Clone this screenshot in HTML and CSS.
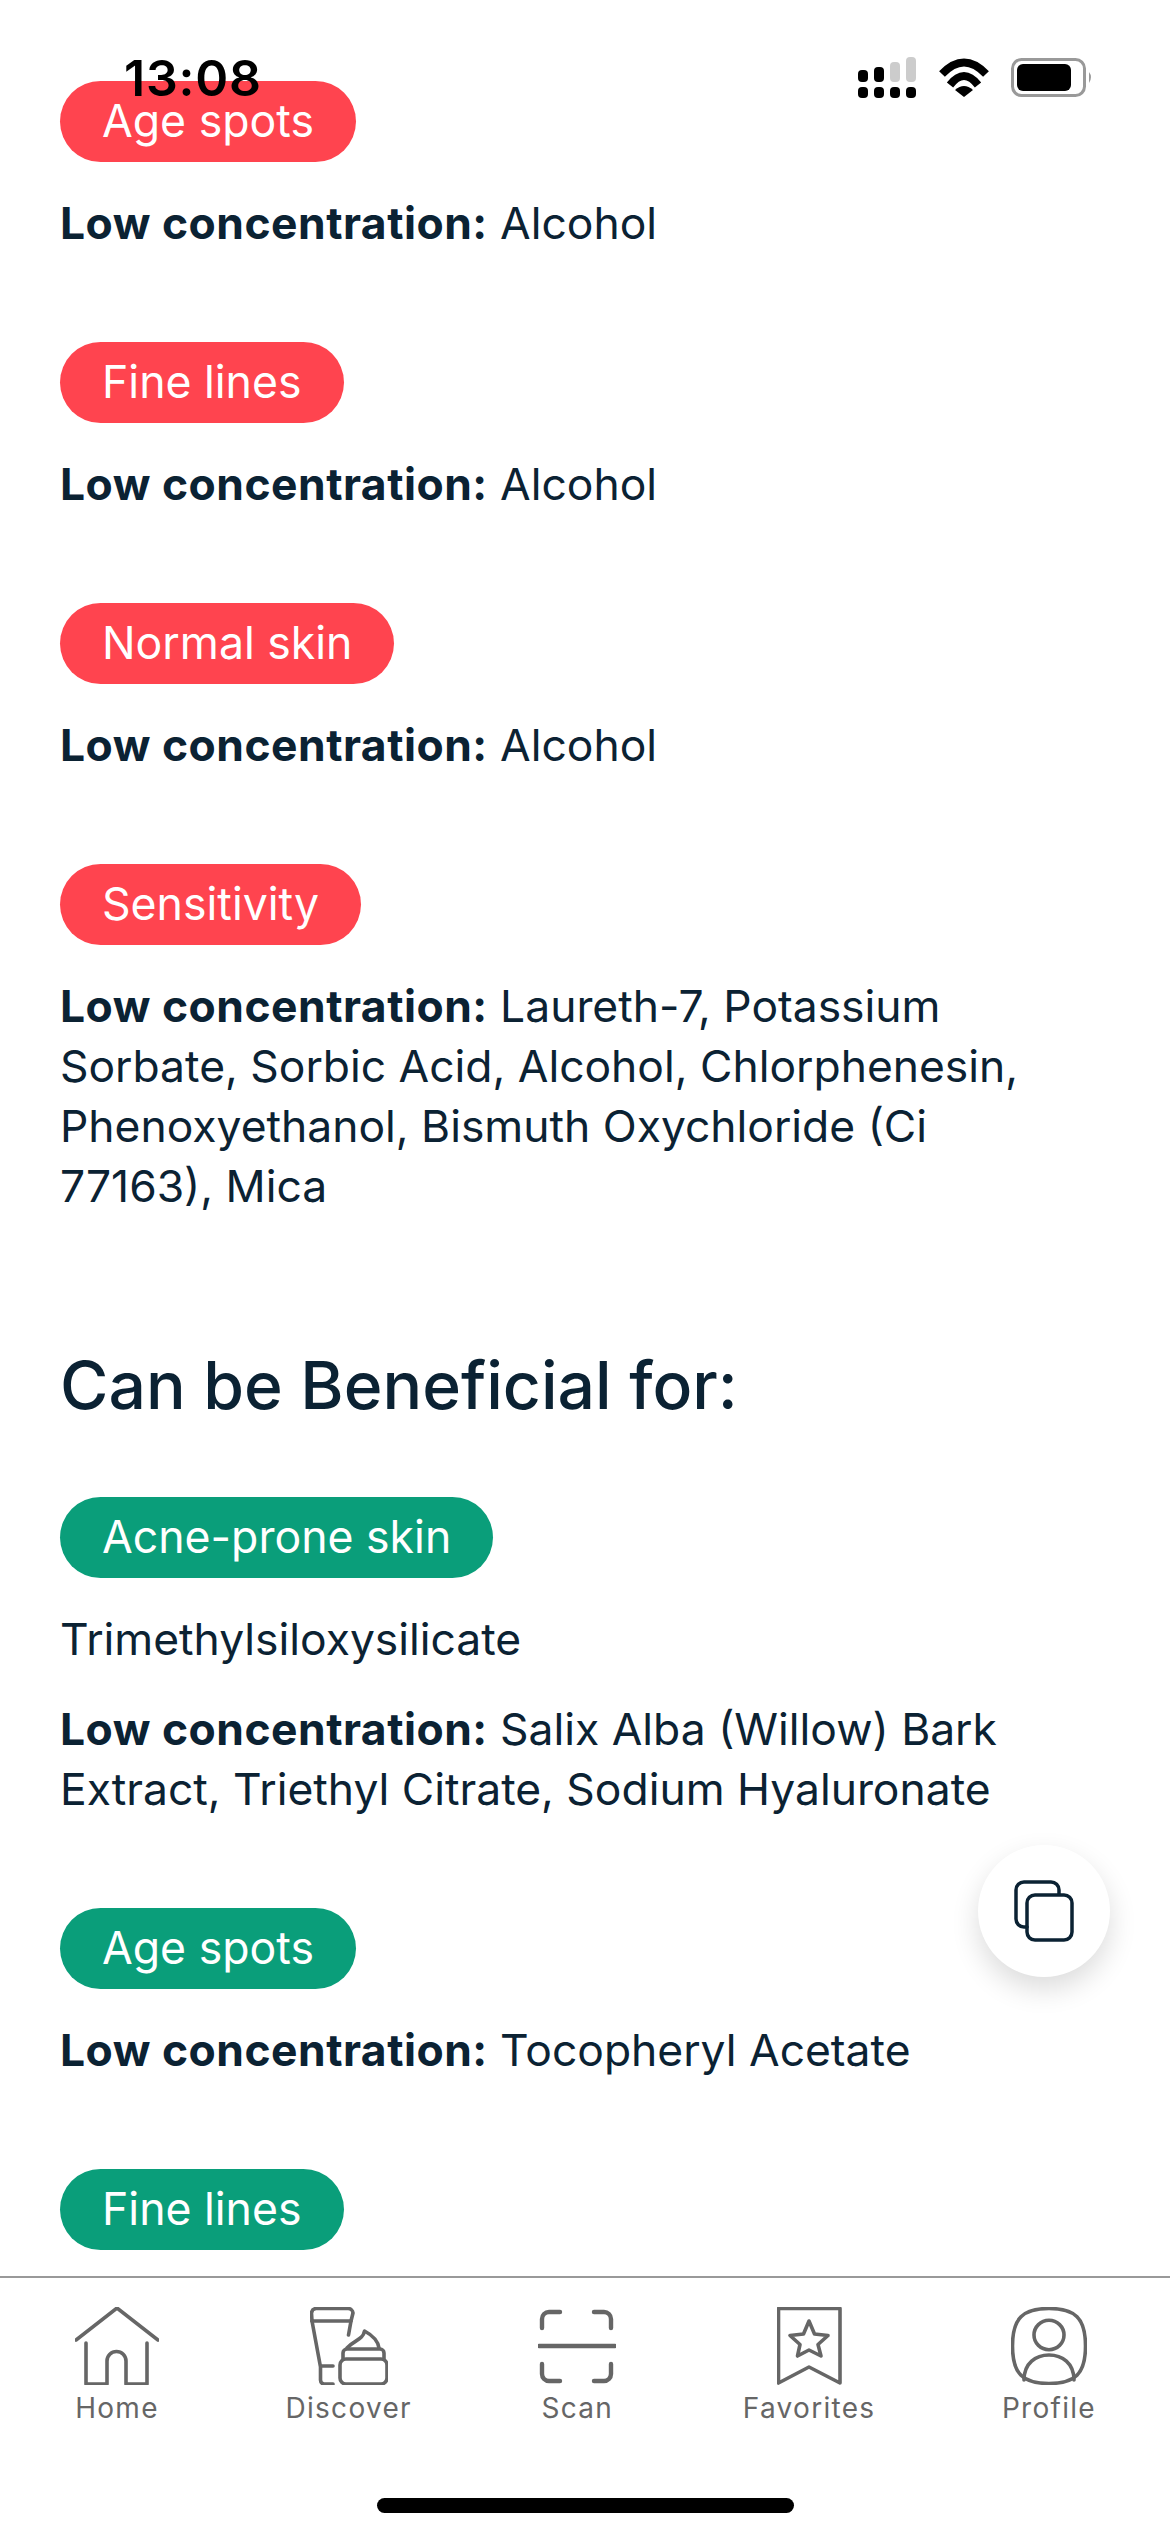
FILE: index.html
```html
<!DOCTYPE html>
<html lang="en">
<head>
<meta charset="utf-8">
<title>Ingredients</title>
<link rel="stylesheet" href="styles.css">
</head>
<body>
<div class="status">
  <span class="time">13:08</span>
  <svg class="status-icons" width="236" height="42" viewBox="0 0 236 42">
    <g fill="#000">
      <rect x="0" y="30" width="10" height="11" rx="4"/><rect x="16" y="30" width="10" height="11" rx="4"/><rect x="32" y="30" width="10" height="11" rx="4"/><rect x="48" y="30" width="10" height="11" rx="4"/>
      <rect x="0" y="13" width="10" height="12" rx="4"/><rect x="16" y="10" width="10" height="15" rx="4"/>
    </g>
    <g fill="#ccc"><rect x="32" y="5" width="10" height="20" rx="4"/><rect x="48" y="0" width="10" height="25" rx="4"/></g>
    <g fill="none" stroke="#000" stroke-width="8">
      <path d="M84 17 Q106 -6 128 17"/>
      <path d="M92 28 Q106 10 120 28"/>
    </g>
    <path d="M97 33 Q106 25 115 33 L106 40 Z" fill="#000"/>
    <rect x="154.5" y="2.5" width="72" height="36" rx="9" fill="none" stroke="#999" stroke-width="3"/>
    <rect x="159" y="7" width="54" height="27" rx="6" fill="#000"/>
    <path d="M231 15 Q235 20 231 26 Z" fill="#999"/>
  </svg>
</div>

<main class="content">
  <section class="group">
    <span class="pill bad">Age spots</span>
    <p class="line"><b>Low concentration:</b> Alcohol</p>
  </section>
  <section class="group">
    <span class="pill bad">Fine lines</span>
    <p class="line"><b>Low concentration:</b> Alcohol</p>
  </section>
  <section class="group">
    <span class="pill bad">Normal skin</span>
    <p class="line"><b>Low concentration:</b> Alcohol</p>
  </section>
  <section class="group">
    <span class="pill bad">Sensitivity</span>
    <p class="line"><b>Low concentration:</b> Laureth-7, Potassium Sorbate, Sorbic Acid, Alcohol, Chlorphenesin, Phenoxyethanol, Bismuth Oxychloride (Ci 77163), Mica</p>
  </section>
  <h2 class="heading">Can be Beneficial for:</h2>
  <section class="group">
    <span class="pill good">Acne-prone skin</span>
    <p class="line">Trimethylsiloxysilicate</p>
    <p class="line"><b>Low concentration:</b> Salix Alba (Willow) Bark Extract, Triethyl Citrate, Sodium Hyaluronate</p>
  </section>
  <section class="group">
    <span class="pill good">Age spots</span>
    <p class="line"><b>Low concentration:</b> Tocopheryl Acetate</p>
  </section>
  <section class="group">
    <span class="pill good">Fine lines</span>
  </section>
</main>

<button class="fab" type="button" aria-label="Compare">
  <svg width="60" height="62" viewBox="0 0 60 62" fill="none" stroke="#0b2233" stroke-width="3.5" stroke-linecap="round">
    <path d="M13 47 H10 A8 8 0 0 1 2 39 V10 A8 8 0 0 1 10 2 H37 A8 8 0 0 1 45 10 V14"/>
    <rect x="13" y="15" width="45" height="45" rx="8"/>
  </svg>
</button>

<nav class="tabbar">
  <div class="tabs">
    <a class="tab">
      <svg class="tab-icon" width="84" height="78" viewBox="0 0 84 78"><path d="M1 33 L42 1 L83 33"/><path d="M11 36 V77 H32 V54 A9.5 9.5 0 0 1 51 54 V77 H72 V36"/></svg>
      <span class="tab-label">Home</span>
    </a>
    <a class="tab">
      <svg class="tab-icon" width="78" height="78" viewBox="0 0 78 78"><path d="M2 14 L1.500 6 A5 5 0 0 1 6 1.500 H38 A5 5 0 0 1 43 6 L41 14 L38.500 28"/><path d="M2 14 H41"/><path d="M2 14 L10.500 60 V73 A4 4 0 0 0 14 77 H23"/><path d="M11 59 H23"/><rect x="30" y="52" width="47" height="25" rx="6"/><path d="M33 52 V46 A4 4 0 0 1 37 42 H70 A4 4 0 0 1 74 46 V52"/><path d="M37 41 C44 33 53 33 54.500 24 C62 28 68 34 69 41"/></svg>
      <span class="tab-label">Discover</span>
    </a>
    <a class="tab">
      <svg class="tab-icon scan" width="78" height="78" viewBox="0 0 78 78"><path d="M4 21 V12 A7 7 0 0 1 11 5 H22"/><path d="M56 5 H66 A7 7 0 0 1 73 12 V21"/><path d="M1 39 H77"/><path d="M4 57 V67 A7 7 0 0 0 11 74 H22"/><path d="M56 74 H66 A7 7 0 0 0 73 67 V57"/></svg>
      <span class="tab-label">Scan</span>
    </a>
    <a class="tab">
      <svg class="tab-icon" width="65" height="78" viewBox="0 0 65 78"><path d="M1.500 1.500 H63 V76 L32 60 L1.500 76 Z"/><path d="M32 14 L37.500 27 L51 28.500 L41 37.500 L44 49 L32 43 L20.500 49 L23 37.500 L13 28.500 L26.500 27 Z"/></svg>
      <span class="tab-label">Favorites</span>
    </a>
    <a class="tab">
      <svg class="tab-icon" width="76" height="78" viewBox="0 0 76 78"><path d="M38 1.500 C64 1.500 74.500 11 74.500 39 C74.500 67 64 76.500 38 76.500 C12 76.500 1.500 67 1.500 39 C1.500 11 12 1.500 38 1.500 Z"/><ellipse cx="38" cy="28" rx="15" ry="14.700"/><path d="M13 73 C13 56 25 48 38 48 C51 48 63 56 63 73"/></svg>
      <span class="tab-label">Profile</span>
    </a>
  </div>
  <div class="home-indicator"></div>
</nav>
</body>
</html>
```

FILE: styles.css
```css
* { box-sizing: border-box; }
html, body { margin: 0; padding: 0; }
body {
  width: 1170px;
  height: 2532px;
  display: flex;
  flex-direction: column;
  overflow: hidden;
  position: relative;
  background: #fff;
  color: #0b2233;
  font-family: Inter, "Noto Sans", sans-serif;
}
.status {
  position: absolute;
  top: 0;
  left: 0;
  right: 0;
  z-index: 2;
  height: 110px;
  padding: 57px 76px 0 124px;
  display: flex;
  justify-content: space-between;
  align-items: flex-start;
}
.time {
  font-size: 50px;
  line-height: 42px;
  font-weight: 600;
  color: #000;
  letter-spacing: 0.8px;
}
.content {
  flex: 1;
  min-height: 0;
  overflow: hidden;
  padding: 81px 90px 0 60px;
}
.group { margin-bottom: 89px; }
.pill {
  display: inline-block;
  height: 81px;
  line-height: 81px;
  padding: 0 42px;
  border-radius: 41px;
  color: #fff;
  font-size: 44.6px;
  font-weight: 400;
}
.bad { background: #ff444f; }
.good { background: #0a9e7a; }
.line {
  margin: 31px 0 0;
  font-size: 44.4px;
  line-height: 60px;
  font-weight: 400;
}
.line + .line { margin-top: 30px; }
.line b { font-weight: 700; letter-spacing: 0.5px; }
.heading {
  margin: 127px 0 70px;
  font-size: 66px;
  line-height: 84px;
  font-weight: 500;
}
.group:has(+ .heading) { margin-bottom: 0; }
.fab {
  position: absolute;
  left: 978px;
  top: 1845px;
  width: 132px;
  height: 132px;
  border: 0;
  padding: 0;
  border-radius: 50%;
  background: #fff;
  box-shadow: 0 12px 28px rgba(0, 0, 0, 0.14);
  display: flex;
  align-items: center;
  justify-content: center;
}
.tabbar {
  flex: none;
  height: 256px;
  border-top: 2px solid #999;
  background: #fff;
  display: flex;
  flex-direction: column;
  align-items: center;
}
.tabs {
  width: 100%;
  display: flex;
  justify-content: space-between;
  padding: 29px 74px 0 75px;
}
.tab {
  display: flex;
  flex-direction: column;
  align-items: center;
  gap: 6px;
  color: #666;
}
.tab-icon {
  display: block;
  fill: none;
  stroke: #666;
  stroke-width: 3.6;
  stroke-linecap: round;
  stroke-linejoin: round;
}
.tab-icon.scan { stroke-width: 4.4; }
.tab-label {
  font-size: 28px;
  line-height: 34px;
  letter-spacing: 1.3px;
  font-weight: 400;
  white-space: nowrap;
}
.home-indicator {
  width: 417px;
  height: 15px;
  margin-top: 73px;
  border-radius: 8px;
  background: #000;
}
```
